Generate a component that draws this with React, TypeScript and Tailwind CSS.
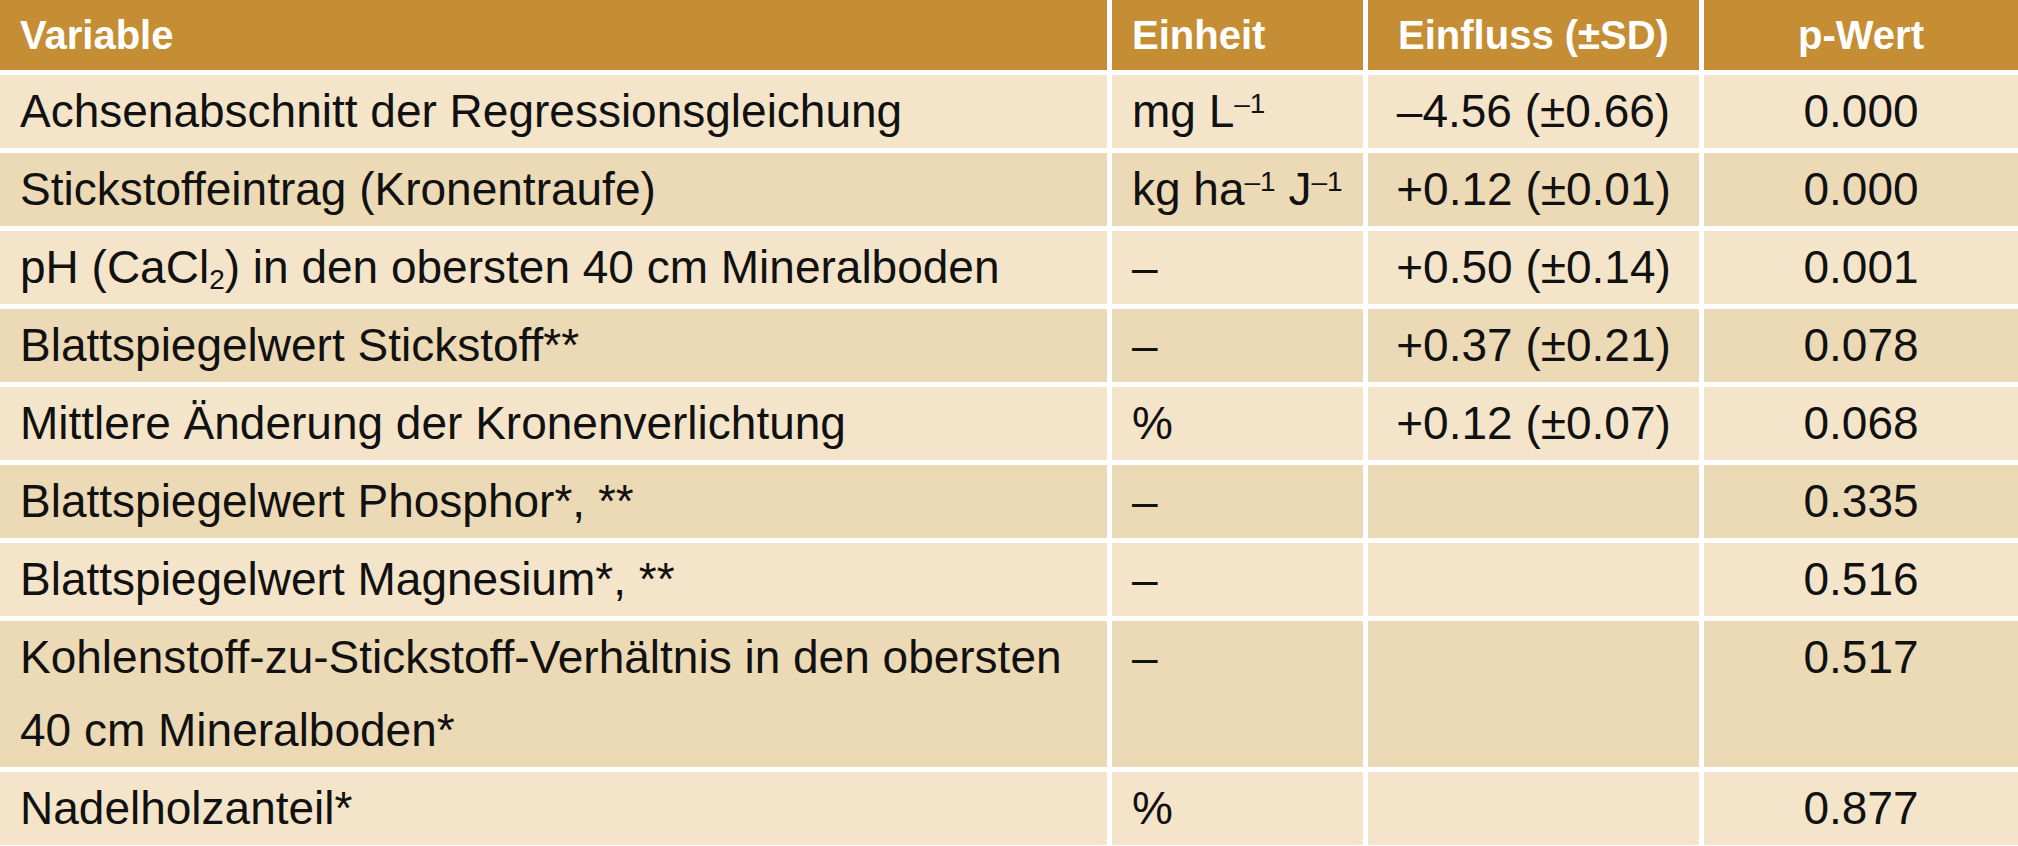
import React from 'react';

type Row = {
  variable: React.ReactNode;
  unit: React.ReactNode;
  effect: string;
  p: string;
};

const Sup: React.FC<{ children: React.ReactNode }> = ({ children }) => (
  <span className="relative -top-[14px] align-baseline text-[28px] leading-none">{children}</span>
);

const rows: Row[] = [
  {
    variable: 'Achsenabschnitt der Regressionsgleichung',
    unit: (
      <>
        mg L<Sup>–1</Sup>
      </>
    ),
    effect: '–4.56 (±0.66)',
    p: '0.000',
  },
  {
    variable: 'Stickstoffeintrag (Kronentraufe)',
    unit: (
      <>
        kg ha<Sup>–1</Sup> J<Sup>–1</Sup>
      </>
    ),
    effect: '+0.12 (±0.01)',
    p: '0.000',
  },
  {
    variable: (
      <>
        pH (CaCl<span className="relative top-[6px] align-baseline text-[28px] leading-none">2</span>) in den obersten 40 cm Mineralboden
      </>
    ),
    unit: '–',
    effect: '+0.50 (±0.14)',
    p: '0.001',
  },
  { variable: 'Blattspiegelwert Stickstoff**', unit: '–', effect: '+0.37 (±0.21)', p: '0.078' },
  { variable: 'Mittlere Änderung der Kronenverlichtung', unit: '%', effect: '+0.12 (±0.07)', p: '0.068' },
  { variable: 'Blattspiegelwert Phosphor*, **', unit: '–', effect: '', p: '0.335' },
  { variable: 'Blattspiegelwert Magnesium*, **', unit: '–', effect: '', p: '0.516' },
  {
    variable: (
      <>
        Kohlenstoff-zu-Stickstoff-Verhältnis in den obersten
        <br />
        40 cm Mineralboden*
      </>
    ),
    unit: '–',
    effect: '',
    p: '0.517',
  },
  { variable: 'Nadelholzanteil*', unit: '%', effect: '', p: '0.877' },
];

export default function App() {
  return (
    <div className="w-[2018px] h-[846px] overflow-hidden bg-white font-['Liberation_Sans',Arial,sans-serif]">
      <div className="grid grid-cols-[1107px_251px_331px_1fr] gap-x-[5px] gap-y-[5px]">
        {/* Kopfzeile */}
        <div className="h-[70px] bg-[#c68e34] px-[20px] flex items-center text-[40px] font-bold text-white">Variable</div>
        <div className="h-[70px] bg-[#c68e34] px-[20px] flex items-center text-[40px] font-bold text-white">Einheit</div>
        <div className="h-[70px] bg-[#c68e34] flex items-center justify-center text-[40px] font-bold text-white">Einfluss (±SD)</div>
        <div className="h-[70px] bg-[#c68e34] flex items-center justify-center text-[40px] font-bold text-white">p-Wert</div>

        {rows.map((row, i) => {
          const bg = i % 2 === 0 ? 'bg-[#f4e5ca]' : 'bg-[#ecd9b5]';
          return (
            <React.Fragment key={i}>
              <div className={`${bg} pl-[20px] text-[46px] leading-[73px] text-[#111] whitespace-nowrap`}>{row.variable}</div>
              <div className={`${bg} pl-[20px] text-[46px] leading-[73px] text-[#111] whitespace-nowrap`}>{row.unit}</div>
              <div className={`${bg} text-center text-[46px] leading-[73px] text-[#111] whitespace-nowrap`}>{row.effect}</div>
              <div className={`${bg} text-center text-[46px] leading-[73px] text-[#111]`}>{row.p}</div>
            </React.Fragment>
          );
        })}
      </div>
    </div>
  );
}
